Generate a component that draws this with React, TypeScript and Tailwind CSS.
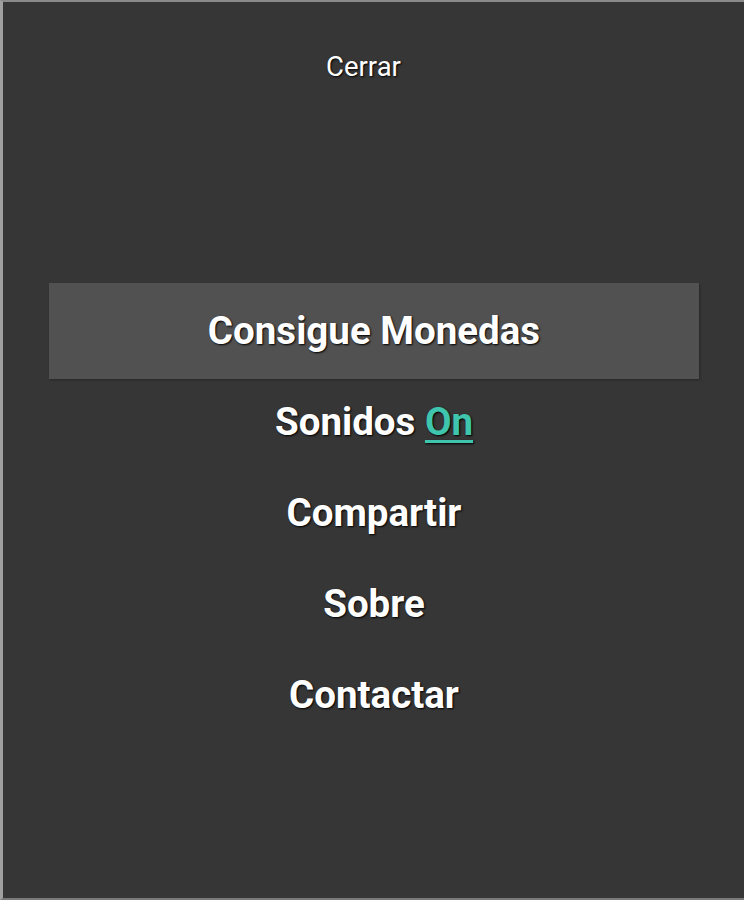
import React, { useState } from 'react';

const items = ['Consigue Monedas', 'Sonidos', 'Compartir', 'Sobre', 'Contactar'];

export default function App() {
  const [sound, setSound] = useState(true);

  return (
    <div
      className="flex h-[900px] w-[744px] flex-col border-t-2 border-b-2 border-l-[3px] border-t-[#8a8a8a] border-b-[#7a7a7a] border-l-[#a0a0a0] bg-[#363636] text-white"
      style={{ fontFamily: 'Roboto, "Noto Sans", sans-serif' }}
    >
      {/* Close */}
      <div className="flex h-[128px] justify-center pt-[49px] pr-[20px]">
        <button className="h-[32px] text-[27.5px] leading-[32px] [text-shadow:1px_1px_2px_#000]">Cerrar</button>
      </div>

      {/* Menu */}
      <ul className="mt-[153px] flex flex-col px-[45px] pl-[46px]">
        {items.map((item, idx) => (
          <li
            key={item}
            className={`flex h-[91px] items-center justify-center text-[38.5px] font-bold [text-shadow:1px_1px_2px_#000] ${
              idx === 0 ? 'mb-[-3px] h-[96px] bg-[#515151] shadow-[1px_1px_2px_rgba(0,0,0,0.3)]' : ''
            }`}
          >
            {item === 'Sonidos' ? (
              <span>
                Sonidos{' '}
                <a
                  href="#"
                  onClick={(e) => {
                    e.preventDefault();
                    setSound(!sound);
                  }}
                  className="text-[#3fc5ad] underline decoration-[3px] underline-offset-[5px]"
                >
                  {sound ? 'On' : 'Off'}
                </a>
              </span>
            ) : (
              item
            )}
          </li>
        ))}
      </ul>
    </div>
  );
}
